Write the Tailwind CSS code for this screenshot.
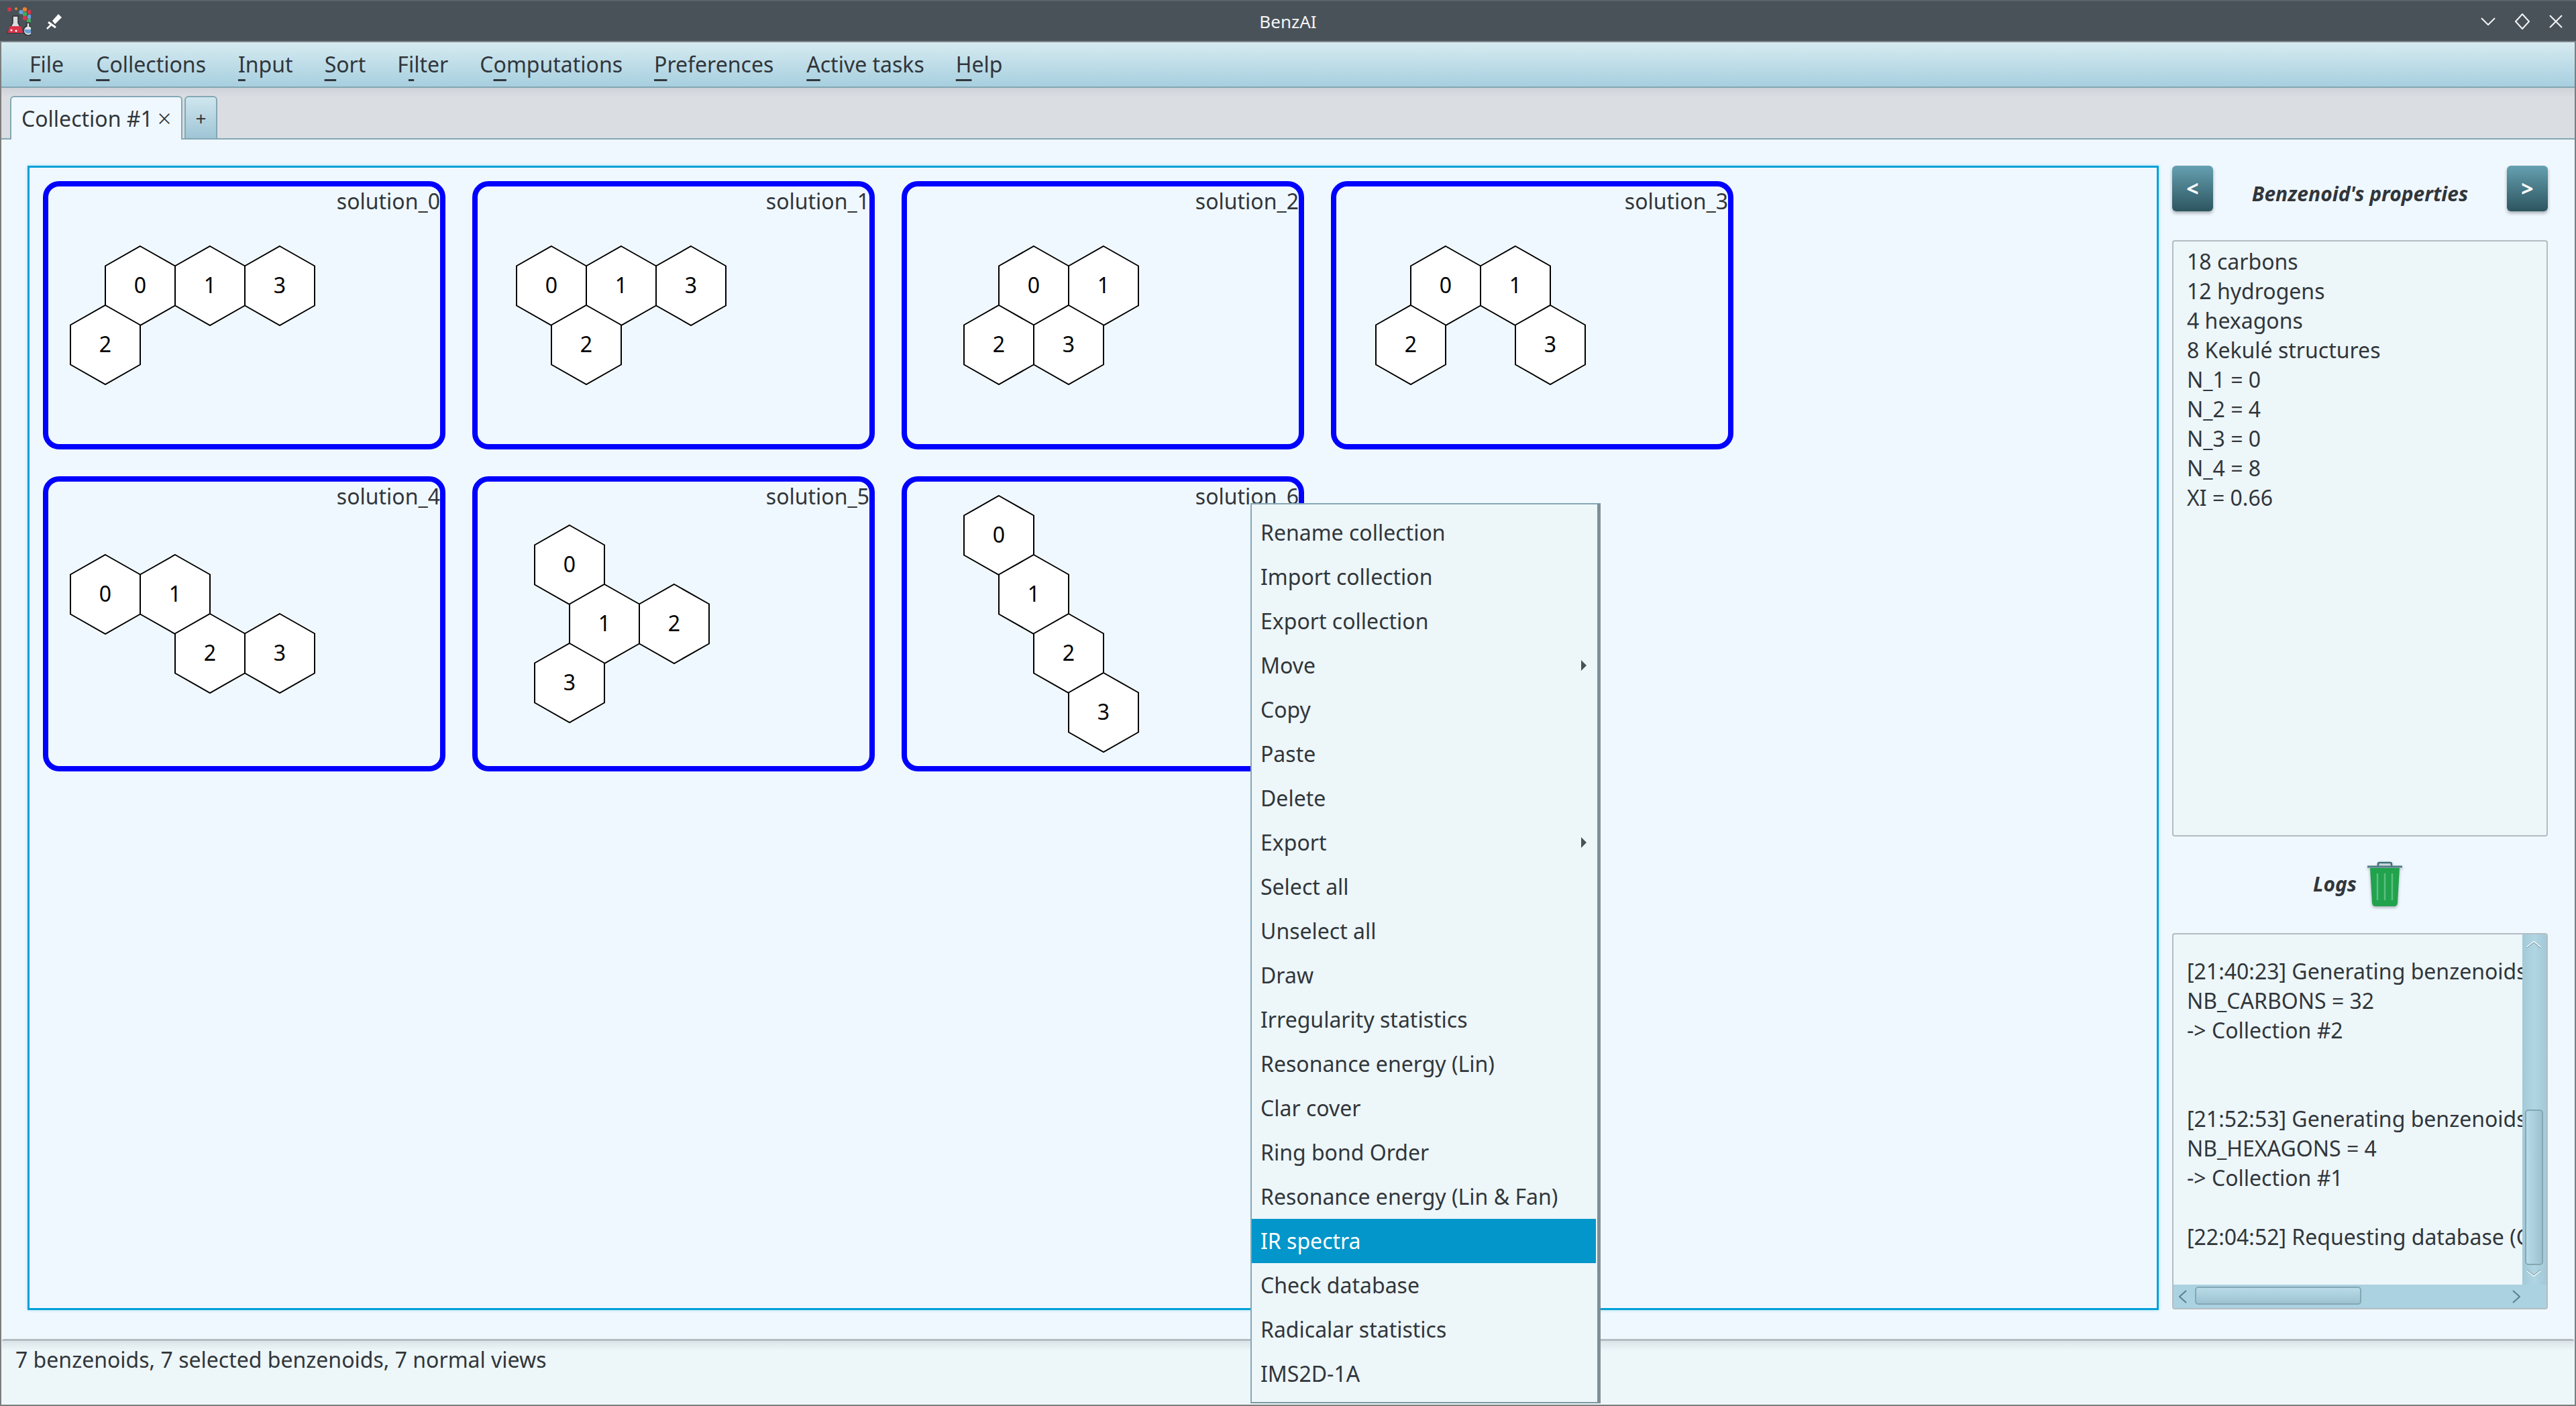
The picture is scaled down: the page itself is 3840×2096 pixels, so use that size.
<!DOCTYPE html>
<html>
<head>
<meta charset="utf-8">
<script src="https://cdn.jsdelivr.net/npm/@tailwindcss/browser@4"></script>
</head>
<body class="m-0">
<svg width="0" height="0" class="absolute"><defs><polygon id="h" points="0,-59 52,-29.5 52,29.5 0,59 -52,29.5 -52,-29.5" fill="#fff" stroke="#000" stroke-width="2"/></defs></svg>
<div class="relative w-[3840px] h-[2096px] overflow-hidden flex flex-col bg-[#f0f8ff] text-[#31363b] text-[32px] leading-[44px] font-['Noto_Sans',sans-serif]">

  <!-- title bar -->
  <div class="h-[63px] shrink-0 grid grid-cols-3 items-center bg-[#4a5259] border-b-2 border-[#7d8488] border-t-2 border-t-[#59626a] text-[#f2f4f5] text-[26px] px-[10px]">
    <div class="flex items-center">
      <svg width="36" height="44" viewBox="9 8 36 44" class="mt-[-2px]">
        <circle cx="13" cy="13" r="3" fill="#d8344a"/><circle cx="23" cy="12" r="2" fill="#e8822a"/>
        <path d="M18 23h8v10l8 15H10l8-15z" fill="#d9dde0" stroke="#2b2f33" stroke-width="1.5"/>
        <path d="M14 38h16l4 10H10z" fill="#d8344a"/>
        <circle cx="16" cy="44" r="1.5" fill="#fff"/><circle cx="23" cy="45" r="1.5" fill="#fff"/>
        <circle cx="30.500" cy="17" r="3.200" fill="#6aa0d8"/><circle cx="36" cy="13" r="3.200" fill="#e8822a"/><circle cx="43" cy="17" r="3.200" fill="#d8344a"/>
        <circle cx="36" cy="20" r="3.200" fill="#3fae5a"/><circle cx="43" cy="24" r="3.200" fill="#6aa0d8"/><circle cx="36" cy="26" r="3.200" fill="#d8344a"/><circle cx="42" cy="30" r="3.200" fill="#3fae5a"/>
        <path d="M39 33h4v5a7 7 0 1 1-4 0z" fill="#dfe3e6" stroke="#2b2f33" stroke-width="1.500"/>
        <path d="M35 43h12a6 6 0 0 1-12 0z" fill="#6aa0d8"/>
      </svg>
      <svg width="26" height="26" viewBox="0 0 26 26" class="ml-[22px]"><path d="M10 12 19 2l5 5-10 10z" fill="#fff"/><path d="M4 14l11 8" stroke="#fff" stroke-width="3"/><path d="M9 17l-7 7" stroke="#fff" stroke-width="2.500"/></svg>
    </div>
    <div class="text-center">BenzAI</div>
    <div class="flex items-center justify-end gap-[29px] pr-[10px]">
      <svg width="22" height="12" viewBox="0 0 22 12"><path d="M1 1l10 10L21 1" fill="none" stroke="#f2f4f5" stroke-width="2"/></svg>
      <svg width="22" height="24" viewBox="0 0 22 24"><path d="M11 1l10 11-10 11L1 12z" fill="none" stroke="#f2f4f5" stroke-width="2"/></svg>
      <svg width="20" height="20" viewBox="0 0 20 20"><path d="M1 1l18 18M19 1L1 19" fill="none" stroke="#f2f4f5" stroke-width="2"/></svg>
    </div>
  </div>

  <div class="flex-1 min-h-0 flex flex-col border-x-2 border-b-2 border-[#7d7d7d]">
    <!-- menu bar -->
    <div class="h-[68px] shrink-0 flex items-center pl-[42px] bg-linear-to-b from-[#d6ebf1] to-[#a7cfdf] border-b-2 border-[#84a7b4]">
      <span class="[text-underline-offset:10px] decoration-2 mr-[48px]"><span class="underline">F</span>ile</span>
      <span class="[text-underline-offset:10px] decoration-2 mr-[48px]"><span class="underline">C</span>ollections</span>
      <span class="[text-underline-offset:10px] decoration-2 mr-[47px]"><span class="underline">I</span>nput</span>
      <span class="[text-underline-offset:10px] decoration-2 mr-[47px]"><span class="underline">S</span>ort</span>
      <span class="[text-underline-offset:10px] decoration-2 mr-[47px]">F<span class="underline">i</span>lter</span>
      <span class="[text-underline-offset:10px] decoration-2 mr-[47px]">C<span class="underline">o</span>mputations</span>
      <span class="[text-underline-offset:10px] decoration-2 mr-[49px]"><span class="underline">P</span>references</span>
      <span class="[text-underline-offset:10px] decoration-2 mr-[47px]"><span class="underline">A</span>ctive tasks</span>
      <span class="[text-underline-offset:10px] decoration-2"><span class="underline">H</span>elp</span>
    </div>

    <!-- tab bar -->
    <div class="h-[77px] shrink-0 flex items-end gap-[3px] pl-[13px] bg-linear-to-b from-[#cfd2d9] to-[#dadee2] to-[18%] border-b-2 border-[#84a7b4]">
      <div class="h-[65px] w-[257px] -mb-[2px] flex items-center pl-[15px] bg-[#f0f8ff] border-x-2 border-t-2 border-[#84a7b4] rounded-t-[6px]">
        <span>Collection #1</span><span class="ml-[7px] text-[36px] font-light">×</span>
      </div>
      <div class="h-[63px] w-[49px] flex items-center justify-center border-x-2 border-t-2 border-[#84a7b4] rounded-t-[6px] bg-linear-to-b from-[#cfe6ee] to-[#9fc5d5] text-[28px]">+</div>
    </div>

    <!-- body -->
    <div class="flex-1 min-h-0 flex pl-[39px] pt-[39px] gap-[20px]">
      <div class="w-[3177px] h-[1706px] shrink-0 border-[3px] border-[#00a0d8] shadow-[0_0_5px_#a8def2] pl-[20px] pt-[20px]">
        <div class="grid grid-cols-[repeat(4,600px)] grid-rows-[400px_440px] gap-[40px]">

          <div class="relative rounded-[24px] border-8 border-[#0000ff] text-right">solution_0
            <svg class="absolute left-[-8px] top-[-8px] overflow-visible" width="600" height="400" text-anchor="middle" fill="#000">
              <use href="#h" x="145" y="156"/><use href="#h" x="249" y="156"/><use href="#h" x="353" y="156"/><use href="#h" x="93" y="244"/>
              <text x="145" y="167">0</text><text x="249" y="167">1</text><text x="353" y="167">3</text><text x="93" y="255">2</text>
            </svg>
          </div>
          <div class="relative rounded-[24px] border-8 border-[#0000ff] text-right">solution_1
            <svg class="absolute left-[-8px] top-[-8px] overflow-visible" width="600" height="400" text-anchor="middle" fill="#000">
              <use href="#h" x="118" y="156"/><use href="#h" x="222" y="156"/><use href="#h" x="326" y="156"/><use href="#h" x="170" y="244"/>
              <text x="118" y="167">0</text><text x="222" y="167">1</text><text x="326" y="167">3</text><text x="170" y="255">2</text>
            </svg>
          </div>
          <div class="relative rounded-[24px] border-8 border-[#0000ff] text-right">solution_2
            <svg class="absolute left-[-8px] top-[-8px] overflow-visible" width="600" height="400" text-anchor="middle" fill="#000">
              <use href="#h" x="197" y="156"/><use href="#h" x="301" y="156"/><use href="#h" x="145" y="244"/><use href="#h" x="249" y="244"/>
              <text x="197" y="167">0</text><text x="301" y="167">1</text><text x="145" y="255">2</text><text x="249" y="255">3</text>
            </svg>
          </div>
          <div class="relative rounded-[24px] border-8 border-[#0000ff] text-right">solution_3
            <svg class="absolute left-[-8px] top-[-8px] overflow-visible" width="600" height="400" text-anchor="middle" fill="#000">
              <use href="#h" x="171" y="156"/><use href="#h" x="275" y="156"/><use href="#h" x="119" y="244"/><use href="#h" x="327" y="244"/>
              <text x="171" y="167">0</text><text x="275" y="167">1</text><text x="119" y="255">2</text><text x="327" y="255">3</text>
            </svg>
          </div>
          <div class="relative rounded-[24px] border-8 border-[#0000ff] text-right">solution_4
            <svg class="absolute left-[-8px] top-[-8px] overflow-visible" width="600" height="440" text-anchor="middle" fill="#000">
              <use href="#h" x="93" y="176"/><use href="#h" x="197" y="176"/><use href="#h" x="249" y="264"/><use href="#h" x="353" y="264"/>
              <text x="93" y="187">0</text><text x="197" y="187">1</text><text x="249" y="275">2</text><text x="353" y="275">3</text>
            </svg>
          </div>
          <div class="relative rounded-[24px] border-8 border-[#0000ff] text-right">solution_5
            <svg class="absolute left-[-8px] top-[-8px] overflow-visible" width="600" height="440" text-anchor="middle" fill="#000">
              <use href="#h" x="145" y="132"/><use href="#h" x="197" y="220"/><use href="#h" x="301" y="220"/><use href="#h" x="145" y="308"/>
              <text x="145" y="143">0</text><text x="197" y="231">1</text><text x="301" y="231">2</text><text x="145" y="319">3</text>
            </svg>
          </div>
          <div class="relative rounded-[24px] border-8 border-[#0000ff] text-right">solution_6
            <svg class="absolute left-[-8px] top-[-8px] overflow-visible" width="600" height="440" text-anchor="middle" fill="#000">
              <use href="#h" x="145" y="88"/><use href="#h" x="197" y="176"/><use href="#h" x="249" y="264"/><use href="#h" x="301" y="352"/>
              <text x="145" y="99">0</text><text x="197" y="187">1</text><text x="249" y="275">2</text><text x="301" y="363">3</text>
            </svg>
          </div>
        </div>
      </div>

      <!-- right panel -->
      <div class="w-[560px] shrink-0 flex flex-col">
        <div class="h-[68px] flex items-start justify-between shrink-0">
          <div class="w-[61px] h-[68px] rounded-[6px] bg-linear-to-b from-[#66a1b1] to-[#2d5560] shadow-[0_3px_5px_#0000004d] text-white font-bold text-[32px] flex items-center justify-center">&lt;</div>
          <div class="self-center mt-[16px] font-bold italic text-[30px]">Benzenoid's properties</div>
          <div class="w-[61px] h-[68px] rounded-[6px] bg-linear-to-b from-[#66a1b1] to-[#2d5560] shadow-[0_3px_5px_#0000004d] text-white font-bold text-[32px] flex items-center justify-center">&gt;</div>
        </div>
        <div class="mt-[43px] h-[889px] shrink-0 rounded-[4px] border-2 border-[#b4bcc3] bg-[#edf6f9] pl-[20px] pt-[8px]">
          <div>18 carbons</div><div>12 hydrogens</div><div>4 hexagons</div><div>8 Kekulé structures</div>
          <div>N_1 = 0</div><div>N_2 = 4</div><div>N_3 = 0</div><div>N_4 = 8</div><div>XI = 0.66</div>
        </div>
        <div class="h-[144px] shrink-0 flex items-center justify-center gap-[15px] pr-[6px] pb-[3px]">
          <span class="font-bold italic text-[30px]">Logs</span>
          <svg width="54" height="68" viewBox="0 0 54 68" class="drop-shadow-[0_2px_2px_#0000004d]">
            <path d="M17 8V4q0-2 2-2h16q2 0 2 2v4" fill="none" stroke="#3f6f78" stroke-width="2.500"/>
            <path d="M1 8h52" stroke="#4f7f88" stroke-width="3"/>
            <path d="M5 10h44l-3 52q-.5 5-5 5H13q-4.500 0-5-5z" fill="#21a24c"/>
            <path d="M16 18v40M27 18v40M38 18v40" stroke="#5cbf7f" stroke-width="2.500"/>
          </svg>
        </div>
        <div class="relative h-[561px] shrink-0 rounded-[4px] border-2 border-[#b4bcc3] bg-[#edf6f9] overflow-hidden">
          <div class="absolute left-0 top-0 w-[521px] h-[525px] overflow-hidden whitespace-nowrap pl-[20px] pt-[33px]">
            <div>[21:40:23] Generating benzenoids</div><div>NB_CARBONS = 32</div><div>-&gt; Collection #2</div><div class="h-[44px]"></div><div class="h-[44px]"></div>
            <div>[21:52:53] Generating benzenoids</div><div>NB_HEXAGONS = 4</div><div>-&gt; Collection #1</div><div class="h-[44px]"></div>
            <div>[22:04:52] Requesting database (Clar</div>
          </div>
          <!-- vertical scrollbar -->
          <div class="absolute right-0 top-0 bottom-0 w-[36px] bg-linear-to-r from-[#a3c9d8] via-[#b0d6e4] to-[#a3c9d8]">
            <svg class="absolute left-[6px] top-[10px]" width="22" height="10" viewBox="0 0 22 10"><path d="M1 9l10-8 10 8" fill="none" stroke="#fff" stroke-width="2"/><path d="M1 10l10-8 10 8" fill="none" stroke="#5f7f8c" stroke-width="1"/></svg>
            <div class="absolute left-[4px] top-[261px] w-[27px] h-[232px] rounded-[5px] border-2 border-[#84a7b4] bg-linear-to-r from-[#b9dbe7] to-[#9cc2d1]"></div>
            <svg class="absolute left-[6px] top-[500px]" width="22" height="10" viewBox="0 0 22 10"><path d="M1 1l10 8 10-8" fill="none" stroke="#fff" stroke-width="2"/><path d="M1 0l10 8 10-8" fill="none" stroke="#5f7f8c" stroke-width="1"/></svg>
          </div>
          <!-- horizontal scrollbar -->
          <div class="absolute left-0 right-0 bottom-0 h-[35px] bg-[#abd2e0]">
            <svg class="absolute left-[8px] top-[8px]" width="12" height="20" viewBox="0 0 12 20"><path d="M11 1L1 10l10 9" fill="none" stroke="#5f7f8c" stroke-width="2"/></svg>
            <div class="absolute left-[32px] top-[3px] w-[248px] h-[27px] rounded-[5px] border-2 border-[#84a7b4] bg-linear-to-b from-[#b9dbe7] to-[#9cc2d1]"></div>
            <svg class="absolute left-[505px] top-[8px]" width="12" height="20" viewBox="0 0 12 20"><path d="M1 1l10 9-10 9" fill="none" stroke="#5f7f8c" stroke-width="2"/></svg>
          </div>
        </div>
      </div>
    </div>

    <!-- status bar -->
    <div class="h-[98px] shrink-0 mx-[1px] bg-linear-to-b from-[#dbe4e8] to-[#edf6f9] to-[15%] border-t-[3px] border-[#b4bcc3] rounded-t-[3px] pl-[20px] pt-[6px]">7 benzenoids, 7 selected benzenoids, 7 normal views</div>
  </div>

  <!-- context menu -->
  <div class="absolute left-[1864px] top-[750px] w-[522px] h-[1342px] bg-[#edf6f9] border-2 border-[#84a7b4] border-r-[5px] border-r-[#7f8f96] border-b-[#7c979f] pt-[9px] pr-[2px]">
    <div class="h-[66px] flex items-center pl-[13px]">Rename collection</div>
    <div class="h-[66px] flex items-center pl-[13px]">Import collection</div>
    <div class="h-[66px] flex items-center pl-[13px]">Export collection</div>
    <div class="h-[66px] flex items-center justify-between pl-[13px] pr-[14px]">Move<svg width="8" height="16" viewBox="0 0 8 16"><path d="M0 0l8 8-8 8z" fill="#4a5259"/></svg></div>
    <div class="h-[66px] flex items-center pl-[13px]">Copy</div>
    <div class="h-[66px] flex items-center pl-[13px]">Paste</div>
    <div class="h-[66px] flex items-center pl-[13px]">Delete</div>
    <div class="h-[66px] flex items-center justify-between pl-[13px] pr-[14px]">Export<svg width="8" height="16" viewBox="0 0 8 16"><path d="M0 0l8 8-8 8z" fill="#4a5259"/></svg></div>
    <div class="h-[66px] flex items-center pl-[13px]">Select all</div>
    <div class="h-[66px] flex items-center pl-[13px]">Unselect all</div>
    <div class="h-[66px] flex items-center pl-[13px]">Draw</div>
    <div class="h-[66px] flex items-center pl-[13px]">Irregularity statistics</div>
    <div class="h-[66px] flex items-center pl-[13px]">Resonance energy (Lin)</div>
    <div class="h-[66px] flex items-center pl-[13px]">Clar cover</div>
    <div class="h-[66px] flex items-center pl-[13px]">Ring bond Order</div>
    <div class="h-[66px] flex items-center pl-[13px]">Resonance energy (Lin &amp; Fan)</div>
    <div class="h-[66px] flex items-center pl-[13px] bg-[#0296ca] text-white">IR spectra</div>
    <div class="h-[66px] flex items-center pl-[13px]">Check database</div>
    <div class="h-[66px] flex items-center pl-[13px]">Radicalar statistics</div>
    <div class="h-[66px] flex items-center pl-[13px]">IMS2D-1A</div>
  </div>
</div>
</body>
</html>
